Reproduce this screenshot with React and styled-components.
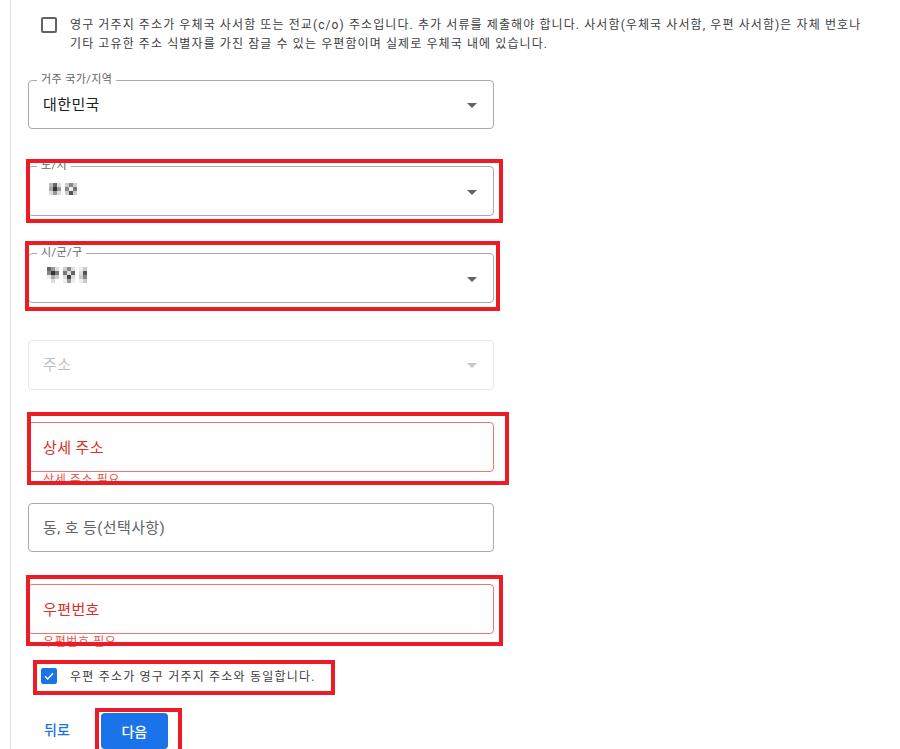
import React from "react";
import styled, { createGlobalStyle } from "styled-components";

const GlobalStyle = createGlobalStyle`
  html, body {
    margin: 0;
    padding: 0;
    background: #ffffff;
  }
  body {
    font-family: Roboto, "Noto Sans CJK KR", "Noto Sans", sans-serif;
    color: #202124;
  }
`;

const mosaicA = [
  ["#bbb", "#666", "#ddd", "#fff", "#ccc", "#888", "#ccc"],
  ["#aaa", "#333", "#999", "#fff", "#888", "#eee", "#777"],
  ["#ddd", "#999", "#ddd", "#fff", "#ccc", "#555", "#ccc"],
];

const mosaicB = [
  ["#666", "#999", "#ddd", "#fff", "#ccc", "#888", "#ddd", "#fff", "#eee", "#ccc"],
  ["#888", "#333", "#777", "#fff", "#777", "#ddd", "#666", "#fff", "#ddd", "#555"],
  ["#eee", "#aaa", "#ccc", "#fff", "#ddd", "#444", "#ddd", "#fff", "#ccc", "#888"],
  ["#fff", "#ddd", "#fff", "#fff", "#eee", "#999", "#eee", "#fff", "#eee", "#ccc"],
];

function Mosaic({ cells }) {
  const size = 4;
  return (
    <svg width={cells[0].length * size} height={cells.length * size}>
      {cells.map((row, y) =>
        row.map((c, x) => (
          <rect key={x + "-" + y} x={x * size} y={y * size} width={size} height={size} fill={c} />
        ))
      )}
    </svg>
  );
}

function Caret({ disabled }) {
  return (
    <CaretWrap>
      <svg width="10" height="5" viewBox="0 0 10 5">
        <path d="M0 0 L10 0 L5 5 Z" fill={disabled ? "#c4c7ca" : "#5f6368"} />
      </svg>
    </CaretWrap>
  );
}

function CheckBox({ checked }) {
  return (
    <Box $checked={checked}>
      {checked && (
        <svg width="12" height="12" viewBox="0 0 24 24">
          <path d="M4 12.5 L9.5 18 L20 6.5" fill="none" stroke="#fff" strokeWidth="3" />
        </svg>
      )}
    </Box>
  );
}

export default function App() {
  return (
    <>
      <GlobalStyle />
      <Page>
        <CheckRow $top>
          <CheckBox />
          <Notice>
            영구 거주지 주소가 우체국 사서함 또는 전교(c/o) 주소입니다. 추가 서류를 제출해야 합니다. 사서함(우체국 사서함, 우편 사서함)은 자체 번호나
            <br />
            기타 고유한 주소 식별자를 가진 잠글 수 있는 우편함이며 실제로 우체국 내에 있습니다.
          </Notice>
        </CheckRow>

        <Field $mt={26}>
          <FloatLabel>거주 국가/지역</FloatLabel>
          <Value>대한민국</Value>
          <Caret />
        </Field>

        <Marked $mt={37}>
          <Field>
            <FloatLabel>도/시</FloatLabel>
            <Blur $x={6} $y={-4}>
              <Mosaic cells={mosaicA} />
            </Blur>
            <Caret />
          </Field>
          <RedBox $t={-7} $l={-2} $r={-9} $b={-7} />
        </Marked>

        <Marked $mt={37}>
          <Field>
            <FloatLabel>시/군/구</FloatLabel>
            <Blur $x={4} $y={-6}>
              <Mosaic cells={mosaicB} />
            </Blur>
            <Caret />
          </Field>
          <RedBox $t={-12} $l={-3} $r={-6} $b={-8} />
        </Marked>

        <Field $mt={37} $disabled>
          <Value $disabled>주소</Value>
          <Caret disabled />
        </Field>

        <Marked $mt={32}>
          <Field $error>
            <Value $error>상세 주소</Value>
          </Field>
          <Helper>상세 주소 필요</Helper>
          <RedBox $t={-10} $l={-1} $r={-15} $b={3} />
        </Marked>

        <Field $mt={15}>
          <Value $muted>동, 호 등(선택사항)</Value>
        </Field>

        <Marked $mt={32}>
          <Field $error>
            <Value $error>우편번호</Value>
          </Field>
          <Helper>우편번호 필요</Helper>
          <RedBox $t={-9} $l={-2} $r={-9} $b={4} />
        </Marked>

        <Marked $mt={18} $inline>
          <CheckRow>
            <CheckBox checked />
            <CheckLabel>우편 주소가 영구 거주지 주소와 동일합니다.</CheckLabel>
          </CheckRow>
          <RedBox $t={-8} $l={5} $r={-19} $b={-11} />
        </Marked>

        <Actions>
          <TextButton>뒤로</TextButton>
          <Marked $inline>
            <PrimaryButton>다음</PrimaryButton>
            <RedBox $t={-5} $l={-6} $r={-14} $b={-4} />
          </Marked>
        </Actions>
      </Page>
    </>
  );
}

const Page = styled.div`
  margin-left: 10px;
  border-left: 1px solid #e3e3e3;
  padding: 16px 0 0 17px;
  box-sizing: border-box;
  display: flex;
  flex-direction: column;
  align-items: flex-start;
  overflow: hidden;
  height: 749px;
`;

const CheckRow = styled.div`
  display: flex;
  align-items: ${(p) => (p.$top ? "flex-start" : "center")};
  padding-left: 13px;
  gap: 13px;
  height: ${(p) => (p.$top ? "auto" : "16px")};
`;

const Box = styled.div`
  flex: none;
  width: 16px;
  height: 16px;
  box-sizing: border-box;
  margin-top: ${(p) => (p.$checked ? "0" : "1px")};
  border-radius: 2px;
  border: 2px solid ${(p) => (p.$checked ? "#1a73e8" : "#5f6368")};
  background: ${(p) => (p.$checked ? "#1a73e8" : "#fff")};
  display: flex;
  align-items: center;
  justify-content: center;
`;

const Notice = styled.div`
  font-size: 12px;
  line-height: 19px;
  color: #3c4043;
  letter-spacing: 1.1px;
  white-space: nowrap;
`;

const CheckLabel = styled.span`
  font-size: 12px;
  color: #3c4043;
  letter-spacing: 1.2px;
`;

const Field = styled.div`
  position: relative;
  margin-top: ${(p) => (p.$mt ? p.$mt + "px" : "0")};
  width: 466px;
  height: 50px;
  box-sizing: border-box;
  border: 1px solid
    ${(p) => (p.$error ? "#e8776e" : p.$disabled ? "#e6e7e9" : "#a7abb0")};
  border-radius: 4px;
  display: flex;
  align-items: center;
  padding: 0 16px 0 14px;
  background: #fff;
`;

const Marked = styled.div`
  position: relative;
  margin-top: ${(p) => (p.$mt ? p.$mt + "px" : "0")};
  display: ${(p) => (p.$inline ? "inline-flex" : "block")};
`;

const RedBox = styled.span`
  position: absolute;
  top: ${(p) => p.$t}px;
  left: ${(p) => p.$l}px;
  right: ${(p) => p.$r}px;
  bottom: ${(p) => p.$b}px;
  border: 4px solid #ed1c24;
  pointer-events: none;
  z-index: 2;
`;

const FloatLabel = styled.span`
  position: absolute;
  top: -8px;
  left: 8px;
  padding: 0 4px;
  background: #fff;
  font-size: 11px;
  line-height: 14px;
  color: #5f6368;
  letter-spacing: 0.4px;
`;

const Value = styled.span`
  flex: 1;
  font-size: 15px;
  letter-spacing: 0.4px;
  color: ${(p) =>
    p.$error ? "#d93025" : p.$disabled ? "#bdc1c6" : p.$muted ? "#5f6368" : "#202124"};
  margin-top: ${(p) => (p.$error ? "0" : "-2px")};
`;

const Blur = styled.span`
  flex: 1;
  display: flex;
  margin-left: ${(p) => p.$x}px;
  margin-top: ${(p) => p.$y}px;
`;

const CaretWrap = styled.span`
  display: flex;
  margin-top: 2px;
`;

const Helper = styled.div`
  height: 16px;
  line-height: 16px;
  padding-left: 15px;
  font-size: 12px;
  color: #e0564b;
  letter-spacing: 0.6px;
`;

const Actions = styled.div`
  display: flex;
  align-items: center;
  gap: 15px;
  margin-top: 29px;
`;

const TextButton = styled.button`
  border: none;
  background: none;
  font-family: inherit;
  font-size: 14px;
  font-weight: 500;
  color: #1a73e8;
  padding: 0 16px;
  height: 36px;
  margin-top: -3px;
  cursor: pointer;
`;

const PrimaryButton = styled.button`
  border: none;
  background: #1a73e8;
  color: #fff;
  font-family: inherit;
  font-size: 14px;
  font-weight: 500;
  height: 36px;
  width: 67px;
  border-radius: 4px;
  cursor: pointer;
`;
